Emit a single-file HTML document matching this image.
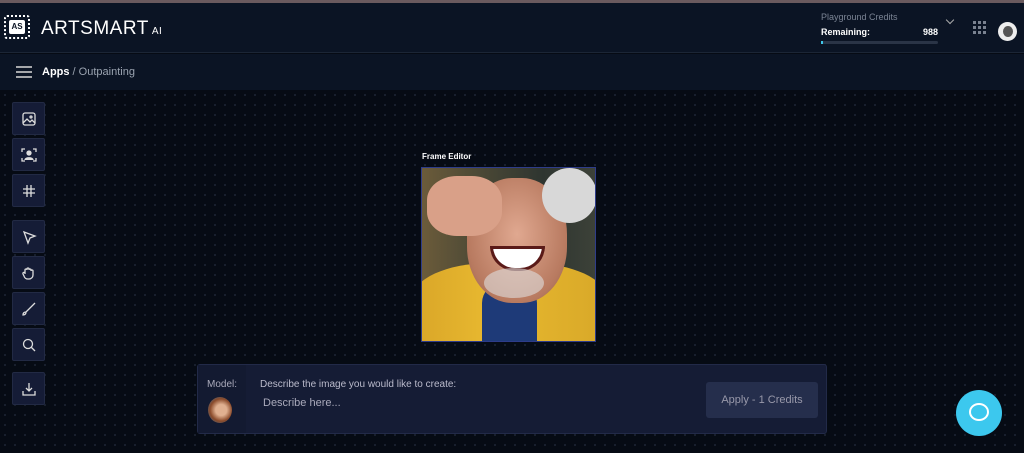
<!DOCTYPE html>
<html><head><style>
*{margin:0;padding:0;box-sizing:border-box}
body{width:1024px;height:453px;overflow:hidden;background:#060b14;font-family:"Liberation Sans",sans-serif;color:#fff;position:relative}
.top{position:absolute;left:0;top:0;width:1024px;height:3px;background:#6a5a5e}
.hdr{position:absolute;top:3px;left:0;width:1024px;height:50px;background:#0b1424;border-bottom:1px solid #1c2636}
.sub{position:absolute;top:54px;left:0;width:1024px;height:36px;background:#0b1424}
.main{position:absolute;top:90px;left:0;width:1024px;height:363px;background-color:#060b14;background-image:radial-gradient(#19212f 1px,transparent 1.2px);background-size:10px 10px}
.btn{position:absolute;left:12px;width:33px;height:33px;background:#151c36;border:1px solid #222a44;border-radius:2px}
.btn svg{position:absolute;left:8px;top:8px}
</style></head><body>
<div class="top"></div>
<div class="hdr">
 <div style="position:absolute;left:4px;top:12px;width:26px;height:24px;border:2px dotted #fff;border-radius:3px"></div>
 <div style="position:absolute;left:9px;top:17px;width:16px;height:14px;background:#fff;border-radius:2px;color:#0b1424;font-size:8px;font-weight:bold;text-align:center;line-height:14px">AS</div>
 <div style="position:absolute;left:41px;top:15px;font-size:19px;letter-spacing:0.5px">ARTSMART<span style="font-size:10px;margin-left:3px">AI</span></div>
 <div style="position:absolute;left:821px;top:9px;font-size:9px;color:#7b8494">Playground Credits</div>
 <div style="position:absolute;left:821px;top:24px;font-size:9px;font-weight:bold">Remaining:</div>
 <div style="position:absolute;left:923px;top:24px;font-size:9px;font-weight:bold">988</div>
 <div style="position:absolute;left:821px;top:38px;width:117px;height:3px;background:#2a3446;border-radius:2px"><div style="width:2px;height:3px;background:#3fc6e8"></div></div>
 <div style="position:absolute;left:947px;top:14px;width:6px;height:6px;border-right:1px solid #aaa;border-bottom:1px solid #aaa;transform:rotate(45deg)"></div>
 <svg style="position:absolute;left:973px;top:18px" width="14" height="14"><g fill="#7a8290"><rect x="0" y="0" width="3" height="3"/><rect x="5" y="0" width="3" height="3"/><rect x="10" y="0" width="3" height="3"/><rect x="0" y="5" width="3" height="3"/><rect x="5" y="5" width="3" height="3"/><rect x="10" y="5" width="3" height="3"/><rect x="0" y="10" width="3" height="3"/><rect x="5" y="10" width="3" height="3"/><rect x="10" y="10" width="3" height="3"/></g></svg>
 <div style="position:absolute;left:998px;top:19px;width:19px;height:19px;border-radius:50%;background:#eee"><div style="position:absolute;left:5px;top:4px;width:10px;height:11px;border-radius:50%;background:#555"></div></div>
</div>
<div class="sub">
 <svg style="position:absolute;left:16px;top:12px" width="16" height="12"><g stroke="#ccc" stroke-width="1.6"><line x1="0" y1="1" x2="16" y2="1"/><line x1="0" y1="6" x2="16" y2="6"/><line x1="0" y1="11" x2="16" y2="11"/></g></svg>
 <div style="position:absolute;left:42px;top:12px;font-size:11px"><b>Apps</b><span style="color:#9aa3b0"> / Outpainting</span></div>
</div>
<div class="main">
 <div class="btn" style="top:12px"><svg width="16" height="16" fill="none" stroke="#ddd" stroke-width="1.3"><rect x="2" y="2" width="12" height="12" rx="2"/><path d="M2 12l4-4 3 3 2-2 3 3"/><circle cx="10" cy="6" r="1"/></svg></div>
 <div class="btn" style="top:48px"><svg width="16" height="16" fill="none" stroke="#ddd" stroke-width="1.3"><path d="M1 5V2h3M12 2h3v3M15 11v3h-3M4 14H1v-3"/><circle cx="8" cy="6" r="2" fill="#ddd"/><path d="M4 13c0-3 8-3 8 0" fill="#ddd"/></svg></div>
 <div class="btn" style="top:84px"><svg width="16" height="16" fill="none" stroke="#ddd" stroke-width="1.3"><path d="M6 2v12M10 2v12M2 6h12M2 10h12"/></svg></div>
 <div class="btn" style="top:130px"><svg width="16" height="16" fill="none" stroke="#ddd" stroke-width="1.3"><path d="M3 3l11 4-5 2-2 5z"/></svg></div>
 <div class="btn" style="top:166px"><svg width="16" height="16" fill="none" stroke="#ddd" stroke-width="1.3"><path d="M4 9V5a1 1 0 012 0V4a1 1 0 012 0v1a1 1 0 012 0v1a1 1 0 012 0v4a4 4 0 01-4 4H7a4 4 0 01-4-3l-1-2a1 1 0 012-1z"/></svg></div>
 <div class="btn" style="top:202px"><svg width="16" height="16" fill="none" stroke="#ddd" stroke-width="1.3"><path d="M14 2L7 9M7 9l-2 2c-2 0-3 1-3 3 2 0 3-1 3-3"/></svg></div>
 <div class="btn" style="top:238px"><svg width="16" height="16" fill="none" stroke="#ddd" stroke-width="1.3"><circle cx="7" cy="7" r="4.5"/><path d="M10.5 10.5L14 14"/></svg></div>
 <div class="btn" style="top:282px"><svg width="16" height="16" fill="none" stroke="#ddd" stroke-width="1.3"><path d="M8 2v8M5 7l3 3 3-3M2 10v4h12v-4"/></svg></div>
 <div style="position:absolute;left:422px;top:62px;font-size:8px;font-weight:bold">Frame Editor</div>
 <div style="position:absolute;left:421px;top:77px;width:175px;height:175px;border:1px solid #2e3c8a;overflow:hidden;background:linear-gradient(90deg,#6b5b3a 0%,#4e4a36 30%,#2e3530 70%,#3c4138 100%)">
  <div style="position:absolute;left:-10px;top:95px;width:195px;height:90px;border-radius:40% 40% 0 0;background:linear-gradient(90deg,#d9a528,#e8b930 40%,#d8a828)"></div>
  <div style="position:absolute;left:60px;top:115px;width:55px;height:60px;background:#1e3a78;border-radius:20px 20px 0 0"></div>
  <div style="position:absolute;left:45px;top:10px;width:100px;height:125px;border-radius:45%;background:radial-gradient(ellipse at 50% 45%,#e0a890,#b87a60 70%,#8a5a48)"></div>
  <div style="position:absolute;left:68px;top:78px;width:55px;height:25px;border-radius:0 0 27px 27px;background:#fff;border:3px solid #5a1a18"></div>
  <div style="position:absolute;left:62px;top:100px;width:60px;height:30px;border-radius:50%;background:#ddd;opacity:.6"></div>
  <div style="position:absolute;left:120px;top:0;width:55px;height:55px;border-radius:50%;background:#d8d8d8"></div>
  <div style="position:absolute;left:5px;top:8px;width:75px;height:60px;border-radius:40%;background:#d9a088"></div>
 </div>
 <div style="position:absolute;left:197px;top:274px;width:630px;height:70px;background:#151c35;border:1px solid #222a48;border-radius:3px">
  <div style="position:absolute;left:0;top:0;width:48px;height:68px;background:#131a31"></div>
  <div style="position:absolute;left:9px;top:14px;font-size:10px;color:#aab">Model:</div>
  <div style="position:absolute;left:10px;top:32px;width:24px;height:26px;border-radius:50%;background:radial-gradient(circle at 55% 50%,#e0b090 30%,#8a4a2a 60%,#2a6a9a)"></div>
  <div style="position:absolute;left:62px;top:14px;font-size:10px;color:#bbc">Describe the image you would like to create:</div>
  <div style="position:absolute;left:65px;top:32px;font-size:11px;color:#aab">Describe here...</div>
  <div style="position:absolute;left:508px;top:17px;width:112px;height:36px;background:#252e4c;border-radius:3px;font-size:11px;color:#99a;text-align:center;line-height:36px">Apply - 1 Credits</div>
 </div>
 <div style="position:absolute;left:956px;top:300px;width:46px;height:46px;border-radius:50%;background:#3cc8ee">
  <div style="position:absolute;left:13px;top:13px;width:20px;height:18px;border-radius:50%;border:2.5px solid #fff"></div>
 </div>
</div>
</body></html>
